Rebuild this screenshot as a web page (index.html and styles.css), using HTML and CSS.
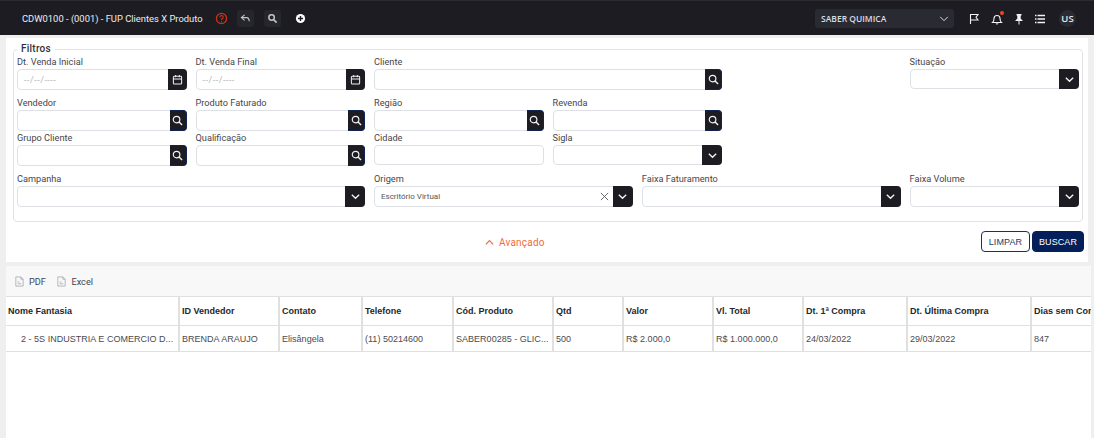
FILE: index.html
```html
<!DOCTYPE html>
<html lang="pt-BR">
<head>
    <meta charset="UTF-8">
    <title>FUP Clientes X Produto</title>
    <link rel="stylesheet" href="styles.css">
</head>
<body>
    <svg class="sprites" width="0" height="0">
        <symbol id="i-search" viewBox="0 0 12 12"><circle cx="5" cy="5" r="3.6" fill="none" stroke="currentColor" stroke-width="1.3"/><path d="M7.7 7.7 11 11" stroke="currentColor" stroke-width="1.5" fill="none"/></symbol>
        <symbol id="i-cal" viewBox="0 0 12 12"><path d="M2.5 2.5h7a1 1 0 0 1 1 1v6.5a1 1 0 0 1-1 1h-7a1 1 0 0 1-1-1V3.500a1 1 0 0 1 1-1ZM1.500 5.500h9M4 1v2.500M8 1v2.500" fill="none" stroke="currentColor" stroke-width="1.100"/></symbol>
        <symbol id="i-chev" viewBox="0 0 12 12"><path d="M2 4l4 4 4-4" fill="none" stroke="currentColor" stroke-width="1.500"/></symbol>
        <symbol id="i-doc" viewBox="0 0 12 12"><path d="M2 1h5.500L10 3.500V11H2ZM7.500 1v2.500H10M4 8.500h4M4 6.500h2" fill="none" stroke="currentColor" stroke-width=".9"/></symbol>
    </svg>

    <header class="topbar">
        <div class="topbar-left">
            <span class="app-title">CDW0100 - (0001) - FUP Clientes X Produto</span>
            <svg class="help-icon" viewBox="0 0 12 12"><circle cx="6" cy="6" r="4.700" fill="none" stroke="currentColor" stroke-width="1.200"/><path d="M4.500 4.800a1.500 1.500 0 1 1 2.300 1.300c-.6.4-.8.7-.8 1.300" fill="none" stroke="currentColor" stroke-width="1.100"/><circle cx="6" cy="8.900" r=".7" fill="currentColor"/></svg>
            <span class="tool-btn"><svg viewBox="0 0 12 12"><path d="M5 2 1.500 5 5 8M1.500 5H7c2 0 3 1.500 3 4" fill="none" stroke="currentColor" stroke-width="1.200"/></svg></span>
            <span class="tool-btn tool-btn-search"><svg viewBox="0 0 12 12"><circle cx="5" cy="5" r="3" fill="none" stroke="currentColor" stroke-width="1.600"/><path d="M7.500 7.500 10.500 10.500" stroke="currentColor" stroke-width="1.800"/></svg></span>
            <span class="tool-btn tool-btn-add"><svg viewBox="0 0 12 12"><circle cx="6" cy="6" r="5" fill="currentColor"/><path d="M6 3.200v5.600M3.200 6h5.600" stroke="#1c1c22" stroke-width="1.500"/></svg></span>
        </div>
        <div class="topbar-right">
            <div class="company-select">
                <span>SABER QUIMICA</span>
                <svg viewBox="0 0 12 12"><path d="M1.500 3.500 6 8l4.500-4.500" fill="none" stroke="currentColor" stroke-width="1.200"/></svg>
            </div>
            <svg class="top-icon icon-flag" viewBox="0 0 12 12"><path d="M2.500 11V1.500h7.500L8 4.200l2 2.800H2.500" fill="none" stroke="currentColor" stroke-width="1.100"/></svg>
            <span class="bell">
                <svg class="top-icon" viewBox="0 0 12 12"><path d="M1.500 9.500c1-1 1.500-1.500 1.500-4a3 3 0 0 1 6 0c0 2.500.5 3 1.500 4ZM5 10.500a1.200 1.200 0 0 0 2 0" fill="none" stroke="currentColor" stroke-width="1.100"/></svg>
                <i class="bell-dot"></i>
            </span>
            <svg class="top-icon icon-pin" viewBox="0 0 12 12"><path d="M3.500 1h5v1.200l-.8.500v3l1.800 1.500V8H6.500v3.500h-1V8H2.500v-.800l1.800-1.500v-3l-.8-.500Z" fill="currentColor"/></svg>
            <svg class="top-icon icon-list" viewBox="0 0 12 12"><path d="M3.500 2.500H11M3.500 6H11M3.500 9.500H11M1 2.500h1.500M1 6h1.500M1 9.500h1.500" stroke="currentColor" stroke-width="1.400" fill="none"/></svg>
            <span class="avatar">US</span>
        </div>
    </header>

    <main class="page">
        <section class="panel filter-panel">
            <fieldset class="filters">
                <legend>Filtros</legend>
                <div class="filter-grid">
                    <div class="field span-2">
                        <label>Dt. Venda Inicial</label>
                        <div class="control"><span class="placeholder">--/--/----</span><span class="addon addon-cal"><svg><use href="#i-cal"/></svg></span></div>
                    </div>
                    <div class="field span-2">
                        <label>Dt. Venda Final</label>
                        <div class="control"><span class="placeholder">--/--/----</span><span class="addon addon-cal"><svg><use href="#i-cal"/></svg></span></div>
                    </div>
                    <div class="field span-4">
                        <label>Cliente</label>
                        <div class="control"><span class="addon addon-search"><svg><use href="#i-search"/></svg></span></div>
                    </div>
                    <div class="field start-11">
                        <label>Situação</label>
                        <div class="control control-short"><span class="addon addon-select"><svg><use href="#i-chev"/></svg></span></div>
                    </div>

                    <div class="field first-2">
                        <label>Vendedor</label>
                        <div class="control"><span class="addon addon-search"><svg><use href="#i-search"/></svg></span></div>
                    </div>
                    <div class="field span-2">
                        <label>Produto Faturado</label>
                        <div class="control"><span class="addon addon-search"><svg><use href="#i-search"/></svg></span></div>
                    </div>
                    <div class="field span-2">
                        <label>Região</label>
                        <div class="control"><span class="addon addon-search"><svg><use href="#i-search"/></svg></span></div>
                    </div>
                    <div class="field span-2">
                        <label>Revenda</label>
                        <div class="control"><span class="addon addon-search"><svg><use href="#i-search"/></svg></span></div>
                    </div>

                    <div class="field first-2">
                        <label>Grupo Cliente</label>
                        <div class="control"><span class="addon addon-search"><svg><use href="#i-search"/></svg></span></div>
                    </div>
                    <div class="field span-2">
                        <label>Qualificação</label>
                        <div class="control"><span class="addon addon-search"><svg><use href="#i-search"/></svg></span></div>
                    </div>
                    <div class="field span-2">
                        <label>Cidade</label>
                        <div class="control control-short"></div>
                    </div>
                    <div class="field span-2">
                        <label>Sigla</label>
                        <div class="control control-short"><span class="addon addon-select"><svg><use href="#i-chev"/></svg></span></div>
                    </div>

                    <div class="field first-4">
                        <label>Campanha</label>
                        <div class="control"><span class="addon addon-select"><svg><use href="#i-chev"/></svg></span></div>
                    </div>
                    <div class="field span-3">
                        <label>Origem</label>
                        <div class="control">
                            <span class="value">Escritório Virtual</span>
                            <svg class="clear-icon" viewBox="0 0 10 10"><path d="M1 1l8 8M9 1l-8 8" stroke="currentColor" stroke-width="1"/></svg>
                            <span class="addon addon-select"><svg><use href="#i-chev"/></svg></span>
                        </div>
                    </div>
                    <div class="field span-3">
                        <label>Faixa Faturamento</label>
                        <div class="control"><span class="addon addon-select"><svg><use href="#i-chev"/></svg></span></div>
                    </div>
                    <div class="field span-2">
                        <label>Faixa Volume</label>
                        <div class="control"><span class="addon addon-select"><svg><use href="#i-chev"/></svg></span></div>
                    </div>
                </div>
            </fieldset>
            <div class="filter-actions">
                <span class="advanced">
                    <svg viewBox="0 0 12 12"><path d="M2 8l4-4 4 4" fill="none" stroke="currentColor" stroke-width="1.300"/></svg>
                    Avançado
                </span>
                <div class="buttons">
                    <button class="btn btn-outline">LIMPAR</button>
                    <button class="btn btn-primary">BUSCAR</button>
                </div>
            </div>
        </section>

        <section class="panel results-panel">
            <div class="results-toolbar">
                <span class="export"><svg><use href="#i-doc"/></svg>PDF</span>
                <span class="export"><svg><use href="#i-doc"/></svg>Excel</span>
            </div>
            <table class="results">
                <colgroup>
                    <col class="c-name"><col class="c-seller"><col class="c-contact"><col class="c-phone"><col class="c-product">
                    <col class="c-qty"><col class="c-value"><col class="c-total"><col class="c-first"><col class="c-last"><col class="c-days">
                </colgroup>
                <thead>
                    <tr>
                        <th>Nome Fantasia</th><th>ID Vendedor</th><th>Contato</th><th>Telefone</th><th>Cód. Produto</th>
                        <th>Qtd</th><th>Valor</th><th>Vl. Total</th><th>Dt. 1ª Compra</th><th>Dt. Última Compra</th><th>Dias sem Compra</th>
                    </tr>
                </thead>
                <tbody>
                    <tr>
                        <td class="cell-name">2 - 5S INDUSTRIA E COMERCIO D...</td><td>BRENDA ARAUJO</td><td>Elisângela</td><td>(11) 50214600</td><td>SABER00285 - GLIC...</td>
                        <td>500</td><td>R$ 2.000,0</td><td>R$ 1.000.000,0</td><td>24/03/2022</td><td>29/03/2022</td><td>847</td>
                    </tr>
                </tbody>
            </table>
        </section>
    </main>
</body>
</html>
```

FILE: styles.css
```css
* {
    box-sizing: border-box;
}
html, body {
    height: 100%;
}
body {
    margin: 0;
    overflow: hidden;
    background: #efefef;
    font-family: Roboto, Arial, sans-serif;
    color: #33343a;
}
.sprites {
    position: absolute;
}

/* top bar */
.topbar {
    height: 35px;
    padding: 1px 18px 0 22px;
    display: flex;
    justify-content: space-between;
    align-items: center;
    background: #1c1c22;
    border-top: 1px solid #2c2c30;
    color: #fff;
}
.topbar-left, .topbar-right {
    display: flex;
    align-items: center;
}
.app-title {
    font-size: 9.400px;
    color: #eeeef2;
    width: 193px;
    white-space: nowrap;
}
.help-icon {
    width: 13px;
    height: 13px;
    color: #c8351c;
    margin-right: 9px;
}
.tool-btn {
    width: 17px;
    height: 17px;
    margin-right: 9px;
    border-radius: 3px;
    background: #26262d;
    display: flex;
    align-items: center;
    justify-content: center;
    color: #c4c4c8;
}
.tool-btn svg {
    width: 11px;
    height: 11px;
}
.tool-btn-search {
    margin-left: 1px;
    margin-right: 11px;
}
.tool-btn-add {
    background: none;
    color: #fff;
}
.company-select {
    width: 139px;
    height: 19px;
    padding: 0 5px 0 6px;
    margin-right: 14px;
    border-radius: 3px;
    background: #2a2a33;
    display: flex;
    justify-content: space-between;
    align-items: center;
    font-family: "Open Sans", Arial, sans-serif;
    font-size: 8.500px;
    font-weight: 600;
    color: #dcdce2;
}
.company-select svg {
    width: 10px;
    height: 10px;
}
.top-icon {
    width: 12px;
    height: 12px;
    display: block;
    color: #f2f2f4;
}
.icon-flag {
    margin-right: 11px;
}
.bell {
    position: relative;
    margin-right: 10px;
}
.bell-dot {
    position: absolute;
    top: -2px;
    right: -1px;
    width: 4px;
    height: 4px;
    border-radius: 50%;
    background: #f0471f;
}
.icon-pin {
    margin-right: 9px;
}
.icon-list {
    margin-right: 13px;
}
.avatar {
    width: 17px;
    height: 17px;
    border-radius: 50%;
    background: #2a2a33;
    font-family: "Open Sans", Arial, sans-serif;
    font-size: 9.500px;
    font-weight: 600;
    display: flex;
    align-items: center;
    justify-content: center;
    color: #e6e6ea;
}

/* panels */
.page {
    padding: 3px 0 0 6px;
}
.panel {
    background: #fff;
}
.filter-panel {
    width: 1082px;
    height: 224px;
    padding: 5px 5px 0 7px;
}

/* filter form */
.filters {
    margin: 0;
    padding: 0 3.500px 0 3px;
    height: 179px;
    min-width: 0;
    border: 1px solid #dfe2e6;
    border-radius: 4px;
}
.filters legend {
    margin-left: 0;
    padding: 0 4px;
    font-size: 10px;
    font-weight: 500;
    letter-spacing: .25px;
    line-height: 12px;
    color: #2f3036;
}
.filter-grid {
    display: grid;
    grid-template-columns: repeat(12, 80.250px);
    grid-template-rows: 41px 35px 41px 36px;
    column-gap: 9px;
}
.span-2 { grid-column: span 2; }
.span-3 { grid-column: span 3; }
.span-4 { grid-column: span 4; }
.first-2 { grid-column: 1 / span 2; }
.first-4 { grid-column: 1 / span 4; }
.start-11 { grid-column: 11 / span 2; }
.field label {
    display: block;
    height: 14px;
    font-size: 9.200px;
    line-height: 14px;
    color: #45464c;
}
.control {
    position: relative;
    height: 21px;
    display: flex;
    align-items: center;
    justify-content: flex-end;
    background: #fff;
    border: 1px solid #dde1e6;
    border-radius: 4px;
}
.control-short {
    height: 20px;
}
.placeholder {
    margin-right: auto;
    padding-left: 6px;
    font-size: 9px;
    letter-spacing: .5px;
    color: #b5b6ba;
}
.value {
    margin-right: auto;
    padding-left: 6px;
    font-size: 8px;
    color: #55565c;
}
.clear-icon {
    width: 9px;
    height: 9px;
    margin-right: 4px;
    color: #55565c;
}
.addon {
    height: 21px;
    margin: -1px -1px -1px 0;
    display: flex;
    align-items: center;
    justify-content: center;
    flex: none;
    background: #1c1c22;
    color: #f2f2f2;
    border-radius: 0 4px 4px 0;
}
.control-short .addon {
    height: 20px;
}
.addon svg {
    width: 11px;
    height: 11px;
}
.addon-cal { width: 19px; }
.addon-search {
    width: 17px;
    border: 1px solid #0f2450;
    border-left: 0;
}
.addon-select { width: 20px; }

/* actions under the form */
.filter-actions {
    position: relative;
    height: 40px;
    margin-right: -1px;
    padding-top: 9px;
    display: flex;
    justify-content: flex-end;
}
.advanced {
    position: absolute;
    left: 471px;
    top: 15px;
    display: flex;
    align-items: center;
    gap: 4px;
    font-size: 10px;
    letter-spacing: .2px;
    color: #f26b3a;
}
.advanced svg {
    width: 11px;
    height: 11px;
}
.buttons {
    display: flex;
    gap: 2px;
}
.btn {
    height: 21px;
    padding: 0;
    border-radius: 4px;
    font-family: "Liberation Sans", Arial, sans-serif;
    font-size: 9px;
    letter-spacing: .1px;
    cursor: pointer;
}
.btn-outline {
    width: 49px;
    background: #fff;
    color: #223a6b;
    border: 1px solid #16305f;
}
.btn-primary {
    width: 52px;
    background: #04205a;
    color: #fff;
    border: 1px solid #04205a;
}

/* results */
.results-panel {
    width: 1085px;
    margin-top: 4px;
    height: 172px;
    overflow: hidden;
}
.results-toolbar {
    height: 30px;
    padding-left: 8px;
    display: flex;
    align-items: center;
    gap: 10.500px;
    background: #f8f8f8;
}
.export {
    display: flex;
    align-items: center;
    gap: 4px;
    font-size: 9.200px;
    color: #45464c;
}
.export svg {
    width: 11px;
    height: 11px;
    color: #a9aaae;
}
.results {
    width: 1200px;
    table-layout: fixed;
    border-collapse: collapse;
    font-family: "Liberation Sans", Arial, sans-serif;
    font-size: 9px;
}
.c-name { width: 173px; }
.c-seller { width: 100px; }
.c-contact { width: 83px; }
.c-phone { width: 91px; }
.c-product { width: 100px; }
.c-qty { width: 70px; }
.c-value { width: 90px; }
.c-total { width: 90px; }
.c-first { width: 104px; }
.c-last { width: 124px; }
.c-days { width: 175px; }
.results th, .results td {
    padding: 0 2px;
    text-align: left;
    white-space: nowrap;
    overflow: hidden;
    border: 1px solid #e0e0e0;
    border-width: 1px 2px 1px 0;
}
.results th {
    height: 29px;
    font-weight: 700;
    color: #26272b;
}
.results td {
    height: 26px;
    letter-spacing: .02px;
    color: #4a4b50;
}
.results .cell-name {
    padding-left: 15px;
}
```
